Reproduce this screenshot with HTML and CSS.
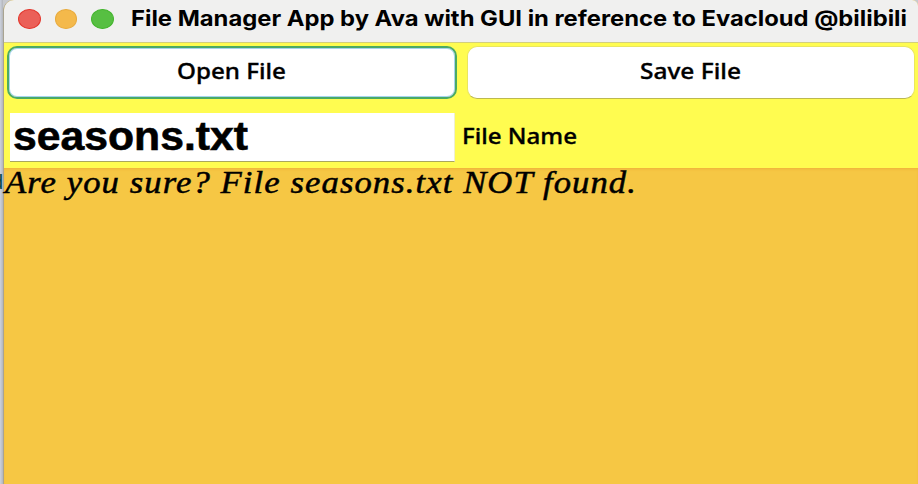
FILE: index.html
```html
<!DOCTYPE html>
<html lang="en">
<head>
<meta charset="utf-8">
<title>File Manager App</title>
<link rel="stylesheet" href="styles.css">
</head>
<body>
<aside class="backdrop"><span>d</span></aside>
<main class="window">
  <header class="titlebar">
    <i class="light close"></i><i class="light minimize"></i><i class="light zoom"></i>
    <h1><svg width="780" height="32"><text x="0" y="20" textLength="776" lengthAdjust="spacingAndGlyphs">File Manager App by Ava with GUI in reference to Evacloud @bilibili</text></svg></h1>
  </header>
  <section class="controls">
    <button class="btn focused"><svg width="109" height="32"><text x="0" y="23" textLength="109" lengthAdjust="spacingAndGlyphs">Open File</text></svg></button>
    <button class="btn"><svg width="101" height="32"><text x="0" y="23" textLength="101" lengthAdjust="spacingAndGlyphs">Save File</text></svg></button>
    <div class="field"><svg width="300" height="48"><text x="0" y="37" textLength="235" lengthAdjust="spacingAndGlyphs">seasons.txt</text></svg></div>
    <div class="label"><svg width="120" height="32"><text x="0" y="23" textLength="115" lengthAdjust="spacingAndGlyphs">File Name</text></svg></div>
  </section>
  <section class="output"><svg width="700" height="40"><text x="1" y="25" textLength="632" lengthAdjust="spacingAndGlyphs">Are you sure? File seasons.txt NOT found.</text></svg></section>
</main>
</body>
</html>
```
FILE: styles.css
```css
* { box-sizing: border-box; }
body {
  margin: 0;
  width: 918px;
  height: 484px;
  overflow: hidden;
  display: flex;
  background: #c8cace;
}
svg { display: block; overflow: visible; flex: none; }
.backdrop {
  width: 3px;
  flex: none;
  overflow: hidden;
  padding-top: 169px;
  background: linear-gradient(90deg, #ccd2de, #b4b6bb);
  font: 20px/26px "Liberation Sans", sans-serif;
  color: #0d4a46;
}
.backdrop span { display: block; margin-left: -8px; }
.window {
  flex: 1;
  display: flex;
  flex-direction: column;
  min-width: 0;
  border-left: 1px solid #a9a491;
  border-radius: 11px 6px 0 0;
  background: #f6c744;
}
.titlebar {
  height: 43px;
  flex: none;
  display: flex;
  align-items: flex-start;
  padding: 9px 0 0 14px;
  border-radius: 10px 6px 0 0;
  border-bottom: 1px solid #d3cf7c;
  background: #f0f0ef;
}
.light {
  width: 22.5px;
  height: 20px;
  margin-right: 14px;
  border-radius: 50%;
  border: 1px solid;
}
.close { background: #eb6058; border-color: #e3382e; }
.minimize { background: #f4b94b; border-color: #e8aa3c; }
.zoom { background: #57bf42; border-color: #44b52e; margin-right: 17.5px; }
h1 { margin: -3px 0 0; font: 700 21.5px Inter, sans-serif; }
.controls {
  flex: none;
  height: 125px;
  display: grid;
  grid-template-columns: 450px 448px;
  grid-template-rows: 53px 51px;
  column-gap: 10px;
  row-gap: 14px;
  padding: 3px 0 0 3px;
  background: #fffc50;
}
.btn, .label { font: 500 22px "Noto Sans", sans-serif; color: #000; }
.btn text, .label text { stroke: #000; stroke-width: .35px; }
.btn {
  display: flex;
  align-items: center;
  justify-content: center;
  margin: 0;
  padding: 0 2px 1px 0;
  border: 1px solid #e9e660;
  border-bottom-color: #bdb94f;
  border-radius: 10px;
  background: #fff;
}
.focused {
  border: 2px solid #4caa64;
  box-shadow: inset 0 0 0 1px #a5d4ee;
}
.field {
  width: 445px;
  height: 49px;
  margin-left: 3px;
  padding-left: 3px;
  border-right: 1px solid #efefd0;
  border-bottom: 1px solid #aaa75b;
  background: #fff;
  font: 700 40px "Liberation Sans", sans-serif;
}
.field text { stroke: #000; stroke-width: .6px; }
.label { padding: 8px 0 0 0; margin-left: -5px; }
.output {
  flex: 1;
  font: italic 32px "Liberation Serif", serif;
  letter-spacing: 1px;
  box-shadow: inset 0 2px 3px -1px #eeaf38;
}
.output text { stroke: #000; stroke-width: .5px; }
```
